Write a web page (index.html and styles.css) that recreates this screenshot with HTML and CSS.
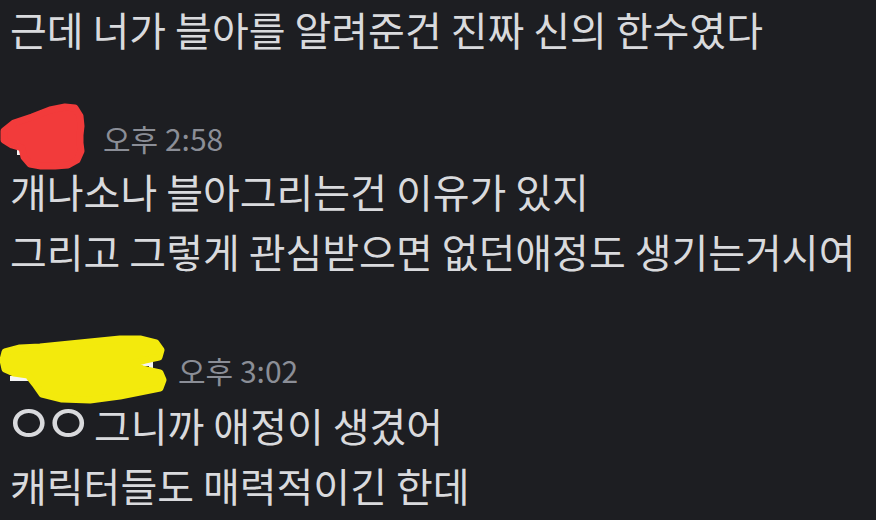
FILE: index.html
```html
<html>
    <head>
        <link rel="stylesheet" href="styles.css">
    </head>
    <body>
        <div id="chat">
            <div class="group first">
                <div class="line">근데 너가 블아를 알려준건 진짜 신의 한수였다</div>
            </div>

            <div class="group second">
                <div class="header">
                    <div class="name short">
                        <svg class="scribble red" width="100" height="80" viewBox="0 100 100 80">
                            <rect x="13" y="120" width="12" height="6" fill="#f4f4f4"/>
                            <rect x="17" y="147" width="6" height="8" fill="#f4f4f4"/>
                            <path d="M4 131 L14 123 L32 117 L50 110 L65 107 L75 108 L80 116 L81 126 L80 135 L80 143 L81 151 L77 160 L68 165 L55 166 L41 166 L30 164 L24 157 L22 148 L12 145 L4 140 Z" fill="#f23b3b" stroke="#f23b3b" stroke-width="7" stroke-linejoin="round"/>
                        </svg>
                    </div>
                    <span class="time t1">오후 2:58</span>
                </div>
                <div class="line">개나소나 블아그리는건 이유가 있지</div>
                <div class="line">그리고 그렇게 관심받으면 없던애정도 생기는거시여</div>
            </div>

            <div class="group third">
                <div class="header">
                    <div class="name long">
                        <svg class="scribble yellow" width="180" height="80" viewBox="0 330 180 80">
                            <rect x="10" y="376" width="24" height="5" fill="#f4f4f4"/>
                            <rect x="132" y="361" width="20" height="5" fill="#f4f4f4"/>
                            <rect x="149" y="361" width="4" height="9" fill="#f4f4f4"/>
                            <path d="M5 352 L20 348 L40 347 L60 345 L90 342 L120 339 L140 339 L156 343 L161 350 L159 357 L145 360 L134 363 L142 369 L160 373 L163 380 L160 388 L145 391 L120 396 L90 400 L62 399 L42 394 L35 384 L28 375 L14 373 L5 369 L3 360 Z" fill="#f3ea0c" stroke="#f3ea0c" stroke-width="7" stroke-linejoin="round"/>
                        </svg>
                    </div>
                    <span class="time t2">오후 3:02</span>
                </div>
                <div class="line"><span class="jamo">ㅇㅇ</span> 그니까 애정이 생겼어</div>
                <div class="line">캐릭터들도 매력적이긴 한데</div>
            </div>
        </div>
    </body>
</html>
```

FILE: styles.css
```css
*{
    padding:0;
    margin:0;
}
body{
    width:876px;
    height:520px;
    overflow:hidden;
    background-color:#1d1e22;
    font-family:"Noto Sans CJK KR", "Noto Sans", sans-serif;
}
#chat{
    display:flex;
    flex-direction:column;
    padding-left:10px;
}
.group{
    display:flex;
    flex-direction:column;
    gap:10px;
}
.group.first .line{
    line-height:58px;
}
.group.second{
    margin-top:48px;
}
.group.third{
    margin-top:64px;
}
.line{
    font-size:40px;
    line-height:50px;
    color:#d9dadd;
    white-space:nowrap;
}
.jamo{
    font-size:56px;
    line-height:0;
    letter-spacing:-12px;
    margin-left:-7px;
    margin-right:3px;
    vertical-align:-2px;
}
.header{
    display:flex;
    align-items:center;
    height:50px;
}
.name{
    position:relative;
    height:50px;
    flex-shrink:0;
}
.name.short{
    width:93px;
}
.name.long{
    width:168px;
}
.scribble{
    position:absolute;
    left:-10px;
}
.red{
    top:-6px;
}
.yellow{
    top:-10px;
}
.time{
    font-size:30px;
    color:#8b8e97;
}
.t1{
    margin-top:14px;
}
.t2{
    margin-top:10px;
}
```
